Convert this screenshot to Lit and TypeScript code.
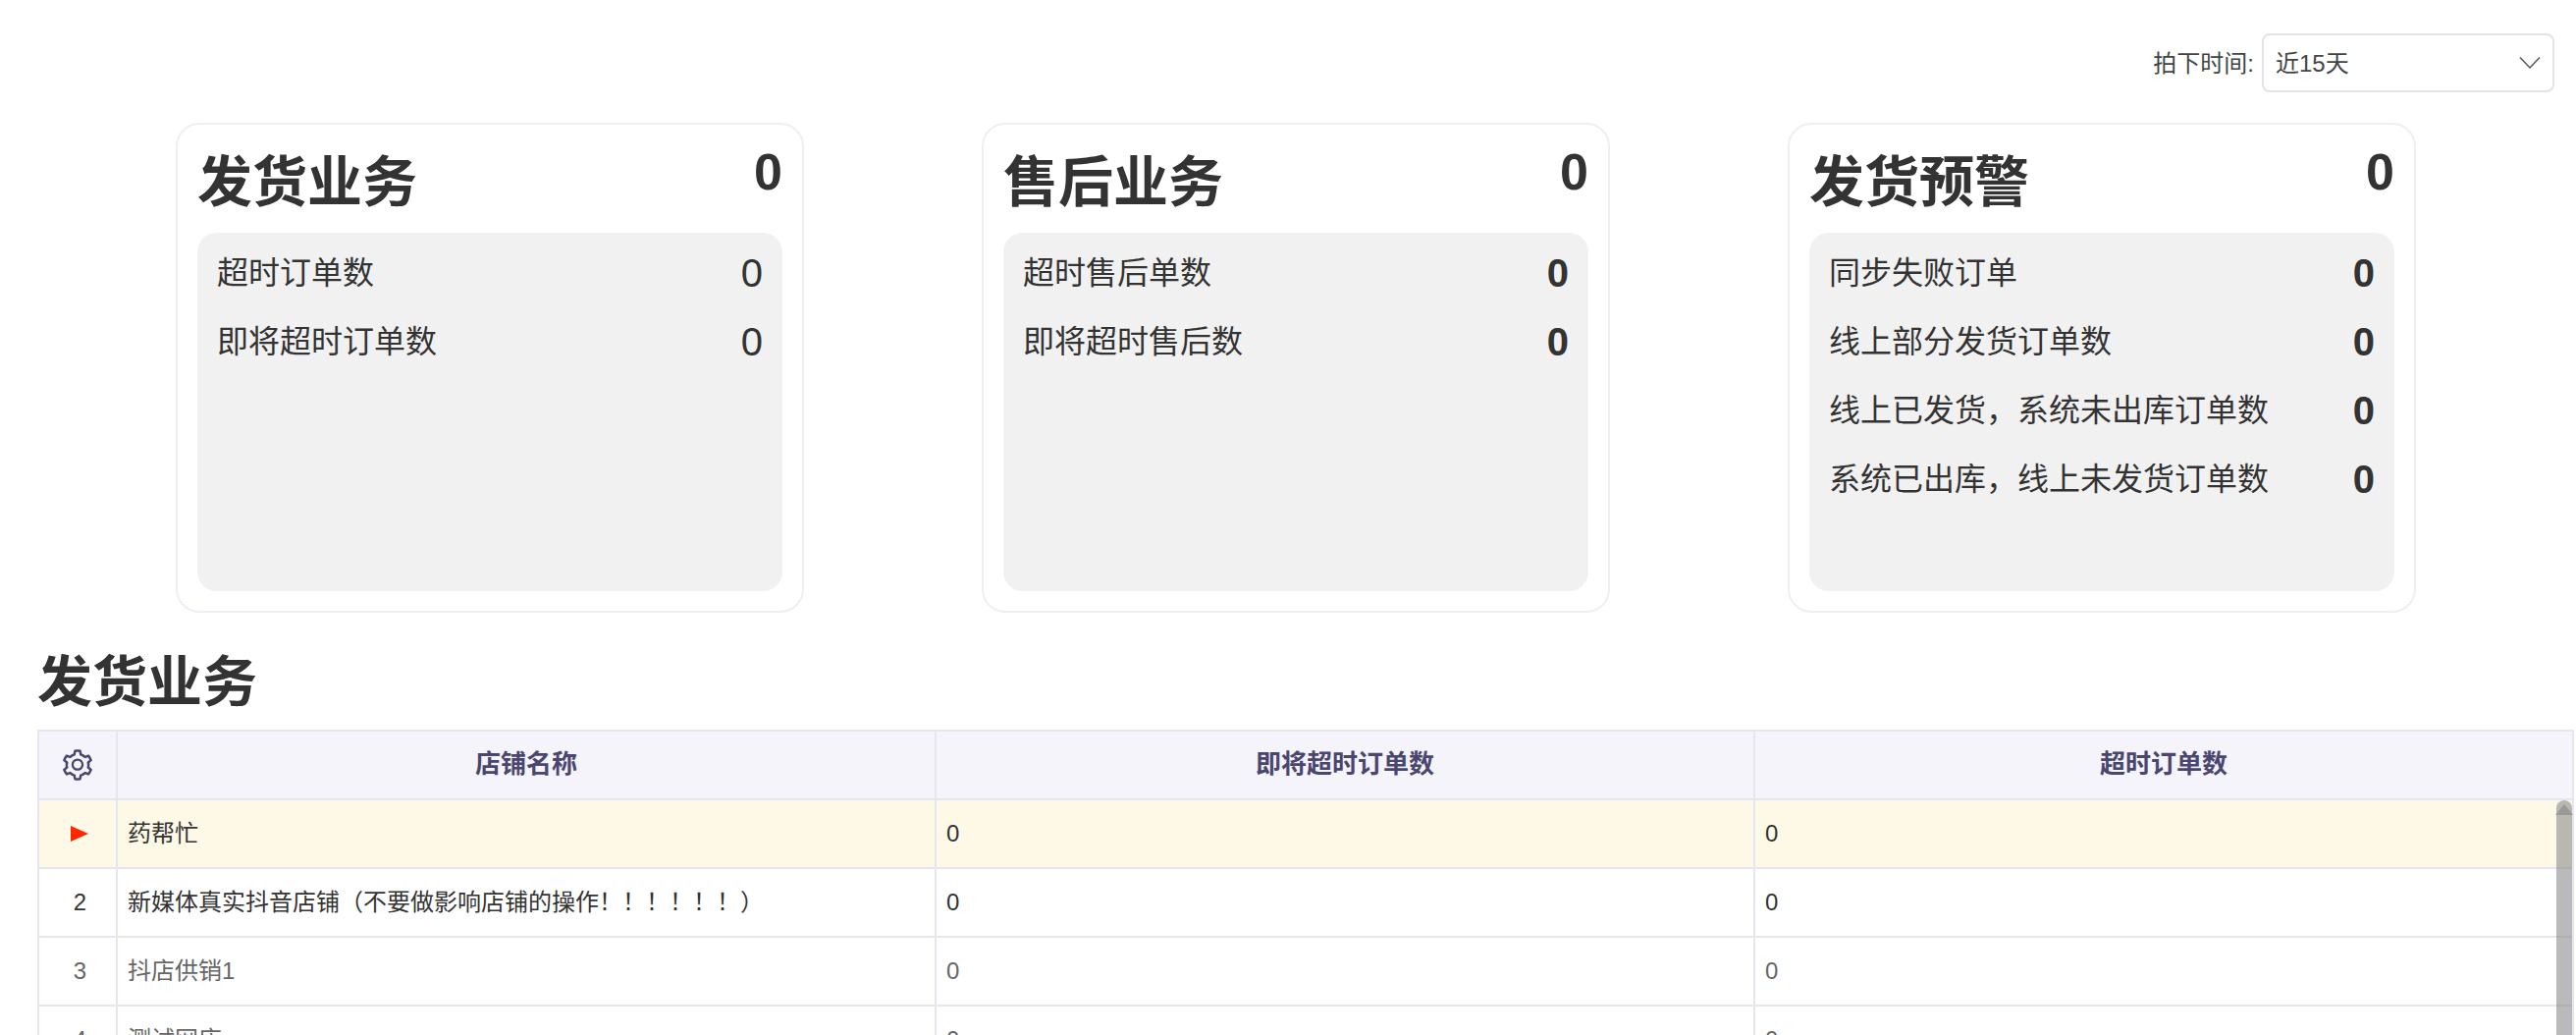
import { LitElement, html, css, svg } from "lit";
import { customElement } from "lit/decorators.js";

const GEAR = "M924.8 625.7l-65.5-56c3.1-19 4.7-38.4 4.7-57.8s-1.6-38.8-4.7-57.8l65.5-56a32.03 32.03 0 0 0 9.3-35.2l-.9-2.6a443.74 443.74 0 0 0-79.7-137.9l-1.8-2.1a32.12 32.12 0 0 0-35.1-9.5l-81.3 28.9c-30-24.6-63.5-44-99.7-57.6l-15.7-85a32.05 32.05 0 0 0-25.8-25.7l-2.7-.5c-52.1-9.4-106.9-9.4-159 0l-2.7.5a32.05 32.05 0 0 0-25.8 25.7l-15.8 85.4a351.86 351.86 0 0 0-99 57.4l-81.9-29.1a32 32 0 0 0-35.1 9.5l-1.8 2.1a446.02 446.02 0 0 0-79.7 137.9l-.9 2.6c-4.5 12.5-.8 26.5 9.3 35.2l66.3 56.6c-3.1 18.8-4.6 38-4.6 57.1 0 19.2 1.5 38.4 4.6 57.1L99 625.5a32.03 32.03 0 0 0-9.3 35.2l.9 2.6c18.1 50.4 44.9 96.9 79.7 137.9l1.8 2.1a32.12 32.12 0 0 0 35.1 9.5l81.9-29.1c29.8 24.5 63.1 43.9 99 57.4l15.8 85.4a32.05 32.05 0 0 0 25.8 25.7l2.7.5a449.4 449.4 0 0 0 159 0l2.7-.5a32.05 32.05 0 0 0 25.8-25.7l15.7-85a350 350 0 0 0 99.7-57.6l81.3 28.9a32 32 0 0 0 35.1-9.5l1.8-2.1c34.8-41.1 61.6-87.5 79.7-137.9l.9-2.6c4.5-12.3.8-26.3-9.3-35zM788.3 465.9c2.5 15.1 3.8 30.6 3.8 46.1s-1.3 31-3.8 46.1l-6.6 40.1 74.7 63.9a370.03 370.03 0 0 1-42.6 73.6L721 702.8l-31.4 25.8c-23.9 19.6-50.5 35-79.3 45.8l-38.1 14.3-17.9 97a377.5 377.5 0 0 1-85 0l-17.9-97.2-37.8-14.5c-28.5-10.8-55-26.2-78.7-45.7l-31.4-25.9-93.4 33.2c-17-22.9-31.2-47.6-42.6-73.6l75.5-64.5-6.5-40c-2.4-14.9-3.7-30.3-3.7-45.5 0-15.3 1.2-30.6 3.7-45.5l6.5-40-75.5-64.5c11.3-26.1 25.6-50.7 42.6-73.6l93.4 33.2 31.4-25.9c23.7-19.5 50.2-34.9 78.7-45.7l37.9-14.3 17.9-97.2c28.1-3.2 56.8-3.2 85 0l17.9 97 38.1 14.3c28.7 10.8 55.4 26.2 79.3 45.8l31.4 25.8 92.8-32.9c17 22.9 31.2 47.6 42.6 73.6L781.8 426l6.5 39.9zM512 326c-97.2 0-176 78.8-176 176s78.8 176 176 176 176-78.8 176-176-78.8-176-176-176zm79.2 255.2A111.6 111.6 0 0 1 512 614c-29.9 0-58-11.7-79.2-32.8A111.6 111.6 0 0 1 400 502c0-29.9 11.7-58 32.8-79.2C454 401.6 482.1 390 512 390c29.9 0 58 11.6 79.2 32.8A111.6 111.6 0 0 1 624 502c0 29.9-11.7 58-32.8 79.2z";

const CARDS = [
  { title: "发货业务", bold: false, rows: ["超时订单数", "即将超时订单数"] },
  { title: "售后业务", bold: true, rows: ["超时售后单数", "即将超时售后数"] },
  { title: "发货预警", bold: true, rows: ["同步失败订单", "线上部分发货订单数", "线上已发货，系统未出库订单数", "系统已出库，线上未发货订单数"] },
];

const ROWS = [
  { name: "药帮忙", cls: "active" },
  { name: "新媒体真实抖音店铺（不要做影响店铺的操作！！！！！！）", cls: "" },
  { name: "抖店供销1", cls: "muted" },
  { name: "测试网店", cls: "muted" },
];

@customElement("app-root")
export class AppRoot extends LitElement {
  static styles = css`
    :host {
      display: block;
      height: 1054px;
      overflow: hidden;
      background: #fff;
      color: #333;
      line-height: 1.2;
      font-family: "Liberation Sans", "Noto Sans CJK SC", sans-serif;
    }
    .filter {
      display: flex;
      justify-content: flex-end;
      align-items: center;
      gap: 8px;
      padding: 34px 22px 0 0;
      font-size: 24px;
      color: #444;
    }
    .filter span { padding-top: 2px; }
    .select {
      box-sizing: border-box;
      width: 298px;
      height: 60px;
      display: flex;
      align-items: center;
      justify-content: space-between;
      padding: 0 12px 0 12px;
      border: 2px solid #e3e3e3;
      border-radius: 8px;
    }
    .select svg { display: block; }
    .cards {
      display: flex;
      gap: 181px;
      padding: 31px 0 0 179px;
    }
    .card {
      box-sizing: border-box;
      width: 640px;
      height: 499px;
      padding: 0 20px 20px;
      border: 2px solid #eeeef5;
      border-radius: 24px;
      display: flex;
      flex-direction: column;
    }
    .card-head {
      height: 110px;
      display: flex;
      justify-content: space-between;
      align-items: flex-start;
      font-weight: 700;
    }
    .card-title { font-size: 56px; line-height: 80px; padding-top: 19px; }
    .card-total { font-size: 52px; line-height: 60px; padding-top: 18px; }
    .inner {
      flex: 1;
      box-sizing: border-box;
      padding: 6px 20px 0;
      background: #f1f1f1;
      border-radius: 20px;
    }
    .row {
      height: 70px;
      display: flex;
      justify-content: space-between;
      align-items: center;
      font-size: 32px;
    }
    .row b { font-size: 40px; font-weight: 400; }
    .row b.strong { font-weight: 700; }
    .section {
      margin: 0;
      padding: 31px 0 0 38px;
      font-size: 56px;
      line-height: 80px;
      font-weight: 700;
      height: 88px;
    }
    .table {
      position: relative;
      margin: 0 2px 0 38px;
      border-top: 2px solid #e4e6f1;
      border-left: 2px solid #e4e6f1;
      border-right: 2px solid #e4e6f1;
      display: grid;
      grid-template-columns: 80px 834px 834px 1fr;
      grid-auto-rows: 70px;
      font-size: 24px;
    }
    .cell {
      box-sizing: border-box;
      display: flex;
      align-items: center;
      padding: 0 10px;
      border-bottom: 2px solid #e4e6f1;
      border-right: 2px solid #e4e6f1;
      color: #333;
    }
    .cell:nth-child(4n) { border-right: 0; }
    .head { background: #f4f4fa; color: #4a4670; font-size: 26px; font-weight: 700; justify-content: center; }
    .num { justify-content: center; padding: 0 0 0 5px; }
    .num.active { padding-left: 3px; }
    .active { background: #fef8e6; }
    .cell.muted { color: #666; }
    .tri { width: 0; height: 0; border-left: 18px solid #ff2600; border-top: 8.5px solid transparent; border-bottom: 8.5px solid transparent; }
    .bar {
      position: absolute;
      top: 70px;
      right: 0;
      bottom: 0;
      width: 16px;
      background: rgba(140, 140, 140, 0.6);
      border-radius: 8px 8px 0 0;
    }
    .bar::before {
      content: "";
      position: absolute;
      top: 4px;
      left: -1px;
      border-left: 9px solid transparent;
      border-right: 9px solid transparent;
      border-bottom: 11px solid #999;
    }
  `;

  render() {
    return html`
      <div class="filter">
        <span>拍下时间:</span>
        <div class="select">
          <span>近15天</span>
          <svg width="22" height="14" viewBox="0 0 22 14" fill="none" stroke="#555" stroke-width="1.5">
            ${svg`<path d="M1 1.5 L11 12 L21 1.5"></path>`}
          </svg>
        </div>
      </div>
      <div class="cards">
        ${CARDS.map(
          (c) => html`
            <div class="card">
              <div class="card-head">
                <span class="card-title">${c.title}</span>
                <span class="card-total">0</span>
              </div>
              <div class="inner">
                ${c.rows.map(
                  (r) => html`<div class="row"><span>${r}</span><b class=${c.bold ? "strong" : ""}>0</b></div>`
                )}
              </div>
            </div>
          `
        )}
      </div>
      <h2 class="section">发货业务</h2>
      <div class="table">
        <div class="cell head">
          <svg width="36" height="36" viewBox="0 0 1024 1024" fill="#4a4670">${svg`<path d=${GEAR}></path>`}</svg>
        </div>
        <div class="cell head">店铺名称</div>
        <div class="cell head">即将超时订单数</div>
        <div class="cell head">超时订单数</div>
        ${ROWS.map(
          (r, i) => html`
            <div class="cell num ${r.cls}">${i === 0 ? html`<span class="tri"></span>` : i + 1}</div>
            <div class="cell ${r.cls}">${r.name}</div>
            <div class="cell ${r.cls}">0</div>
            <div class="cell ${r.cls}">0</div>
          `
        )}
        <div class="bar"></div>
      </div>
    `;
  }
}
